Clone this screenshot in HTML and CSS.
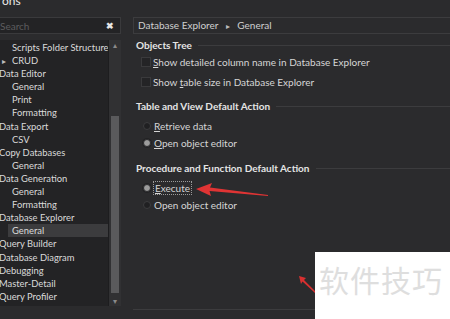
FILE: index.html
```html
<!DOCTYPE html>
<html>
<head>
  <title>Options</title>
  <link rel="stylesheet" href="styles.css">
</head>
<body>
  <div class="title">ons</div>
  <div class="main">
    <div class="left">
      <div class="search">
        <span>Search</span>
        <span class="clear">&#x2716;</span>
      </div>
      <div class="tree">
        <ul class="items">
          <li class="sub">Scripts Folder Structure</li>
          <li class="sub"><span class="caret">&#9656;</span>CRUD</li>
          <li>Data Editor</li>
          <li class="sub">General</li>
          <li class="sub">Print</li>
          <li class="sub">Formatting</li>
          <li>Data Export</li>
          <li class="sub">CSV</li>
          <li>Copy Databases</li>
          <li class="sub">General</li>
          <li>Data Generation</li>
          <li class="sub">General</li>
          <li class="sub">Formatting</li>
          <li>Database Explorer</li>
          <li class="sub active">General</li>
          <li>Query Builder</li>
          <li>Database Diagram</li>
          <li>Debugging</li>
          <li>Master-Detail</li>
          <li>Query Profiler</li>
        </ul>
        <div class="scroll">
          <span class="btn">&#9652;</span>
          <div class="track"><div class="thumb"></div></div>
          <span class="btn">&#9662;</span>
        </div>
      </div>
    </div>

    <div class="right">
      <div class="crumb">Database Explorer <span class="sep">&#9656;</span> General</div>
      <div class="panel">
        <div class="group first">
          <div class="head">Objects Tree</div>
          <label class="check"><span class="box"></span><span><u>S</u>how detailed column name in Database Explorer</span></label>
          <label class="check"><span class="box"></span><span>Show <u>t</u>able size in Database Explorer</span></label>
        </div>
        <div class="group">
          <div class="head">Table and View Default Action</div>
          <label class="radio"><span class="dot"></span><span><u>R</u>etrieve data</span></label>
          <label class="radio"><span class="dot on"></span><span><u>O</u>pen object editor</span></label>
        </div>
        <div class="group">
          <div class="head">Procedure and Function Default Action</div>
          <label class="radio"><span class="dot on"></span><span class="focus"><u>E</u>xecute</span></label>
          <label class="radio"><span class="dot"></span><span>Open object editor</span></label>
        </div>
      </div>
    </div>
  </div>

  <svg class="arrow" width="450" height="319" viewBox="0 0 450 319">
    <path d="M196 189 L212 183 L210 187.6 L268 195 L268 196 L209.5 191 L211 196 Z" fill="#e03434"/>
    <path d="M299 276 L306 278 L304 280 L316 292 L315 293 L302.5 281.5 L301 284 Z" fill="#d83030"/>
  </svg>
  <div class="mark">软件技巧</div>
</body>
</html>
```

FILE: styles.css
```css
body {
  margin: 0;
  padding-top: 1px;
  height: 318px;
  overflow: hidden;
  background-color: #2b2b2d;
  color: #dadada;
  font-family: Lato, "Noto Sans", sans-serif;
  font-size: 10px;
  position: relative;
}

.title {
  height: 12px;
  line-height: 12px;
  margin-top: -6px;
  padding-left: 2px;
  font-size: 12px;
  color: #e8e8e8;
}

.main {
  display: flex;
  margin-top: 10px;
}

.left {
  width: 124px;
  margin-left: -3px;
  flex-shrink: 0;
}

.search {
  height: 15px;
  display: flex;
  align-items: center;
  justify-content: space-between;
  padding: 0 6px 0 2px;
  background-color: #232325;
  border: 1px solid #3a3a3c;
  color: #5c5c5e;
}

.search .clear {
  color: #e6e6e6;
  font-size: 9px;
  font-weight: bold;
}

.tree {
  display: flex;
  margin-top: 6px;
  height: 266px;
}

.items {
  list-style: none;
  margin: 0;
  padding: 1px 0 0;
  width: 111px;
  background-color: #232325;
  border-right: 1px solid #1d1d1f;
  font-size: 9.4px;
  overflow: hidden;
}

.items li {
  height: 13.1px;
  line-height: 13.1px;
  white-space: nowrap;
  padding-left: 2px;
}

.items li.sub {
  padding-left: 15px;
}

.items li.active {
  background-color: #3c3c3e;
  margin-left: 11px;
  padding-left: 4px;
}

.caret {
  display: inline-block;
  width: 0;
  margin-left: -10px;
  margin-right: 10px;
  font-size: 8px;
  color: #bcbcbc;
}

.scroll {
  width: 12px;
  display: flex;
  flex-direction: column;
  align-items: center;
  background-color: #313133;
}

.scroll .btn {
  height: 10px;
  line-height: 10px;
  font-size: 8px;
  color: #8a8a8a;
}

.track {
  flex: 1;
  width: 8px;
  padding-top: 66px;
  padding-bottom: 3px;
  display: flex;
}

.thumb {
  flex: 1;
  background-color: #5a5a5c;
}

.right {
  flex: 1;
  margin-left: 12px;
}

.crumb {
  height: 15px;
  line-height: 15px;
  border: 1px solid #3c3c3e;
  border-right: none;
  padding-left: 4px;
  color: #d0d0d0;
}

.crumb .sep {
  font-size: 8px;
  color: #bbb;
  margin: 0 5px;
}

.panel {
  height: 271px;
  box-sizing: border-box;
  border-bottom: 1px solid #3c3c3e;
  padding-left: 3px;
}

.group {
  padding-bottom: 6px;
}

.group.first {
  padding-bottom: 3px;
}

.head {
  display: flex;
  align-items: center;
  height: 12px;
  margin-top: 5px;
  font-weight: bold;
  color: #e4e4e4;
  white-space: nowrap;
}

.head::after {
  content: "";
  flex: 1;
  height: 1px;
  margin-left: 6px;
  background-color: #3c3c3e;
}

.check,
.radio {
  display: flex;
  align-items: center;
  color: #d6d6d6;
  white-space: nowrap;
}

.check {
  height: 20px;
  margin-left: 5px;
}

.head + .check {
  margin-top: 1px;
}

.radio {
  height: 17px;
  margin-left: 6px;
}

.head + .radio {
  margin-top: 5px;
}

.box {
  width: 8px;
  height: 8px;
  margin-right: 2px;
  background-color: #242426;
  border: 1px solid #3a3a3c;
}

.dot {
  width: 6px;
  height: 6px;
  margin: 0 3px 0 1px;
  border-radius: 50%;
  background-color: #202022;
  border: 1px solid #3c3c3e;
}

.dot.on {
  background-color: #9c9c9c;
  border-color: #2a2a2c;
  box-shadow: 0 0 0 1px #232325;
}

.focus {
  outline: 1px dotted #9a9a9a;
  padding: 0 1px;
}

.arrow {
  position: absolute;
  left: 0;
  top: 0;
}

.mark {
  position: absolute;
  left: 315px;
  top: 252px;
  width: 135px;
  height: 67px;
  background-color: #fff;
  color: #dedede;
  font-family: "Noto Sans CJK SC", sans-serif;
  font-size: 30px;
  line-height: 30px;
  padding: 12px 0 0 4px;
  letter-spacing: 1px;
  box-sizing: border-box;
}
```
